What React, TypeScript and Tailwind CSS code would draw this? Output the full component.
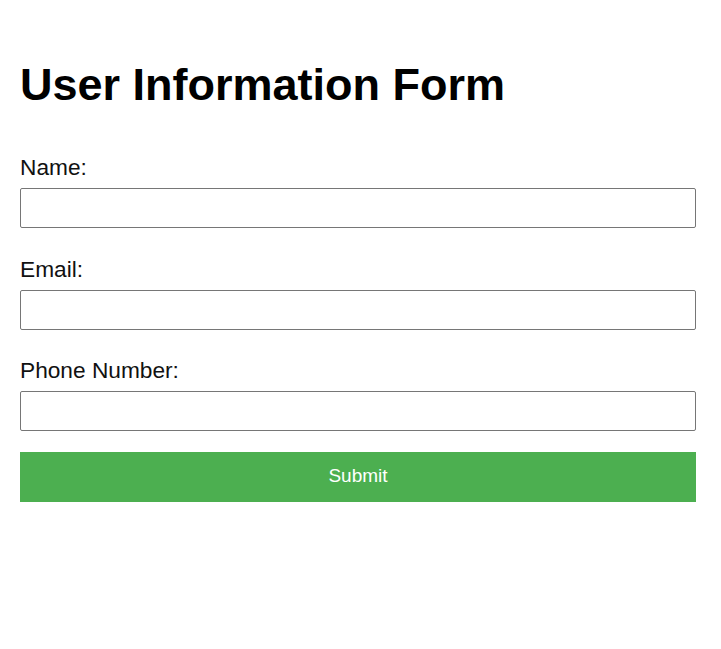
import React, { useState } from 'react';

const fields = [
  { id: 'name', label: 'Name:', type: 'text' },
  { id: 'email', label: 'Email:', type: 'email' },
  { id: 'phone', label: 'Phone Number:', type: 'tel' },
];

const App: React.FC = () => {
  const [values, setValues] = useState<Record<string, string>>({});

  return (
    <div className="min-h-screen bg-white px-5 pt-[59px] text-black font-['Liberation_Sans',Arial,sans-serif]">
      <h1 className="text-[45px] font-bold leading-[52px]">User Information Form</h1>
      <form className="mt-[41px] w-[676px]" onSubmit={(e) => e.preventDefault()}>
        {fields.map((f) => (
          <div key={f.id} className="mb-[25.5px] flex flex-col">
            <label htmlFor={f.id} className="pt-[2px] text-[22.7px] leading-[26px] text-[#111]">
              {f.label}
            </label>
            <input
              id={f.id}
              type={f.type}
              value={values[f.id] ?? ''}
              onChange={(e) => setValues({ ...values, [f.id]: e.target.value })}
              className="mt-[8px] h-10 w-full rounded-[2px] border border-[#767676] bg-white px-2 text-base outline-none"
            />
          </div>
        ))}
        <button
          type="submit"
          className="-mt-[5px] h-[50px] w-full bg-[#4caf50] text-[19px] text-white"
        >
          Submit
        </button>
      </form>
    </div>
  );
};

export default App;
